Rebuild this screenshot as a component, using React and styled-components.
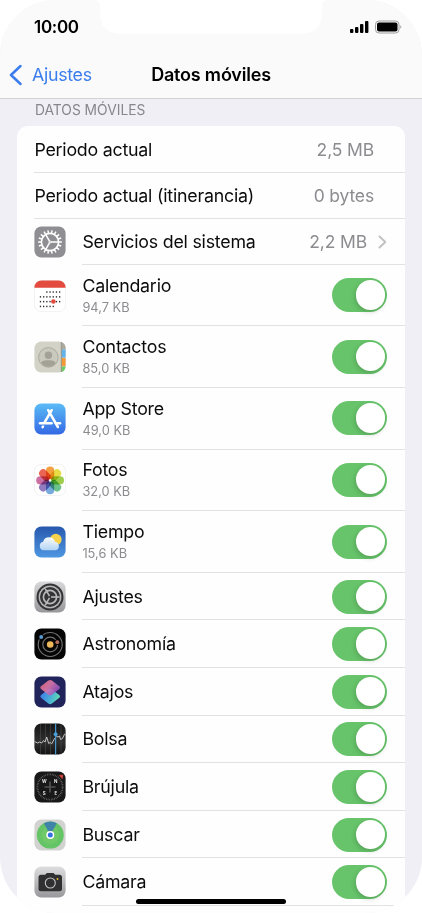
import React, { useState } from 'react'
import styled, { createGlobalStyle } from 'styled-components'

const GlobalStyle = createGlobalStyle`
    * {
        box-sizing: border-box;
    }
    body {
        margin: 0;
        background: #fff;
        font-family: Inter, "Liberation Sans", sans-serif;
        overflow: hidden;
    }
`

const Phone = styled.div`
    position: relative;
    width: 422px;
    height: 913px;
    overflow: hidden;
    border-radius: 56px;
    background: #f0eff5;
    color: #0b0b0b;
`

const Header = styled.header`
    height: 99px;
    background: #fafafa;
    border-bottom: 1px solid #d2d2d5;
`

const Notch = styled.svg`
    position: absolute;
    top: 0;
    left: 94px;
    display: block;
`

const StatusBar = styled.div`
    height: 52px;
    padding: 2px 20px 0 34px;
    display: flex;
    align-items: center;
    justify-content: space-between;
`

const Clock = styled.span`
    font-size: 17px;
    font-weight: 600;
    letter-spacing: -0.3px;
    color: #000;
`

const NavBar = styled.div`
    height: 45px;
    padding: 0 9px;
    display: grid;
    grid-template-columns: 1fr auto 1fr;
    align-items: center;
`

const BackButton = styled.button`
    display: flex;
    align-items: center;
    gap: 10px;
    padding: 0;
    border: 0;
    background: none;
    color: #3b7ded;
    font: inherit;
    font-size: 17.8px;
    line-height: 22px;
    letter-spacing: -0.3px;
`

const Title = styled.h1`
    margin: 0;
    font-size: 18px;
    line-height: 22px;
    font-weight: 600;
    letter-spacing: -0.2px;
    color: #000;
`

const SectionLabel = styled.h2`
    margin: 0;
    height: 27px;
    padding: 2px 0 0 35px;
    font-size: 13.8px;
    line-height: 18px;
    font-weight: 400;
    letter-spacing: 0;
    color: #87878b;
`

const Card = styled.ul`
    list-style: none;
    margin: 0 17px;
    padding: 0.6px 0 20px;
    border-radius: 11px;
    background: #fefefe;
`

const Row = styled.li`
    display: flex;
    height: ${({ $height }) => $height}px;
    padding-left: 17.4px;
`

const IconBox = styled.span`
    width: 48px;
    display: flex;
    align-items: center;
    flex: none;
    svg {
        display: block;
        width: 32px;
        height: 32px;
    }
`

const RowBody = styled.div`
    flex: 1;
    display: flex;
    align-items: center;
    justify-content: space-between;
    padding: ${({ $top = 1 }) => $top}px ${({ $right }) => $right}px 0 0;
    border-bottom: 1px solid #e2e2e4;
`

const Name = styled.div`
    font-size: 17.8px;
    line-height: 22px;
    letter-spacing: -0.22px;
`

const Usage = styled.div`
    margin-top: 2px;
    font-size: 12.8px;
    line-height: 17px;
    letter-spacing: 0.02px;
    color: #8c8c90;
`

const Value = styled.span`
    display: flex;
    align-items: center;
    gap: 11px;
    font-size: 17.5px;
    line-height: 22px;
    letter-spacing: -0.15px;
    color: #8c8c90;
`

const Toggle = styled.button`
    width: 55px;
    height: 34px;
    padding: 2px;
    border: 0;
    border-radius: 17px;
    display: flex;
    justify-content: ${({ $on }) => ($on ? 'flex-end' : 'flex-start')};
    background: ${({ $on }) => ($on ? '#67c46a' : '#e9e9eb')};
`

const Knob = styled.span`
    width: 29.5px;
    height: 29.5px;
    border-radius: 50%;
    background: #fff;
    box-shadow: -1px 2px 5px rgba(0, 0, 0, 0.17);
`

const HomeIndicator = styled.div`
    position: absolute;
    left: 136px;
    top: 899px;
    width: 150px;
    height: 5px;
    border-radius: 3px;
    background: #000;
`

const rotations = (count) => Array.from({ length: count }, (_, i) => (i * 360) / count)

const Tile = ({ fill, stroke, children }) => (
    <svg viewBox="0 0 32 32">
        <rect x="0.4" y="0.4" width="31.2" height="31.2" rx="7" fill={fill} stroke={stroke} strokeWidth="0.7" />
        {children}
    </svg>
)

const SystemIcon = () => (
    <Tile fill="#8e8e93">
        <g stroke="#fff" fill="none">
            <circle cx="16" cy="16" r="8.6" strokeWidth="1.7" />
            {rotations(18).map((a) => (
                <path key={a} d="M16 4.1V7.2" strokeWidth="1.5" transform={`rotate(${a + 10} 16 16)`} />
            ))}
            {[90, 210, 330].map((a) => (
                <path key={a} d="M16 15V7.5" strokeWidth="1.5" transform={`rotate(${a} 16 16)`} />
            ))}
            <circle cx="16" cy="16" r="1" strokeWidth="1" />
        </g>
    </Tile>
)

const calendarDots = [
    [12.8, 16, 19.2, 22.4, 25.6],
    [6.4, 9.6, 12.8, 16, 19.2, 22.4, 25.6],
    [6.4, 9.6, 12.8, 16, 22.4, 25.6],
    [6.4, 9.6, 12.8, 16, 19.2],
]

const CalendarIcon = () => (
    <Tile fill="#fff" stroke="#ededed">
        <path d="M.4 7.7V7.4a7 7 0 0 1 7-7h17.2a7 7 0 0 1 7 7v.3z" fill="#e44b3f" />
        {calendarDots.map((row, y) => row.map((x) => (
            <rect key={`${x}-${y}`} x={x - 0.6} y={11.3 + y * 4.8} width="1.3" height="1.5" fill="#333" />
        )))}
        <circle cx="19.4" cy="21.5" r="2.3" fill="#e44b3f" />
    </Tile>
)

const ContactsIcon = () => (
    <Tile fill="#d3d2c7">
        <path d="M27.6.9a7 7 0 0 1 4 6.5V8.5h-4z" fill="#aaa99f" />
        <path d="M27.6 8.5h4v8h-4z" fill="#61b3ea" />
        <path d="M27.6 17h4v8h-4z" fill="#f29a37" />
        <path d="M27.6 25.5h4a7 7 0 0 1-4 5.7z" fill="#68cc62" />
        <path d="M27.3 1v30" stroke="#8d8b7d" strokeWidth="0.9" />
        <circle cx="14.4" cy="16.4" r="9.8" fill="#cac9be" stroke="#a8a69b" strokeWidth="0.9" />
        <circle cx="14.4" cy="14.2" r="3.7" fill="#a4a298" />
        <path d="M7 22.1c1-2.7 4-2.8 7.4-2.8s6.4.1 7.4 2.8a9.3 9.3 0 0 1-14.8 0z" fill="#a4a298" />
    </Tile>
)

const AppStoreIcon = () => (
    <Tile fill="url(#store)">
        <defs>
            <linearGradient id="store" x2="0" y2="1">
                <stop stopColor="#5abcf6" />
                <stop offset="1" stopColor="#3468e4" />
            </linearGradient>
        </defs>
        <g stroke="#fff" strokeWidth="2.5" strokeLinecap="round">
            <path d="M14.2 7.2L23.9 24" />
            <path d="M17.7 7.2L10.7 19.2" />
            <path d="M6 20.3H17.6" />
            <path d="M22 20.3H26" />
            <path d="M9 23.5L8.6 24.2" />
        </g>
    </Tile>
)

const petals = ['#f5a040', '#e8dd45', '#9fce4c', '#6cc28a', '#76a9dc', '#927cc0', '#cc70a4', '#ea6554']

const PhotosIcon = () => (
    <Tile fill="#fff" stroke="#ededed">
        {petals.map((color, i) => (
            <rect
                key={color}
                x="12"
                y="2.5"
                width="8.2"
                height="13"
                rx="4.1"
                fill={color}
                style={{ mixBlendMode: 'multiply' }}
                transform={`rotate(${i * 45} 16.1 16.4)`}
            />
        ))}
        <circle cx="16.1" cy="16.4" r="1.2" fill="#fff" />
    </Tile>
)

const WeatherIcon = () => (
    <Tile fill="url(#sky)">
        <defs>
            <linearGradient id="sky" x2="0" y2="1">
                <stop stopColor="#2758ad" />
                <stop offset="1" stopColor="#4f97e2" />
            </linearGradient>
            <linearGradient id="cloud" x2="0" y2="1">
                <stop stopColor="#fff" />
                <stop offset="1" stopColor="#b7d7f5" />
            </linearGradient>
        </defs>
        <circle cx="21.8" cy="13.5" r="5.8" fill="#f7d24c" />
        <path d="M9.5 24.3a4.4 4.4 0 0 1-.4-8.6 6.2 6.2 0 0 1 11.9 0 4.4 4.4 0 0 1 .7 8.6z" fill="url(#cloud)" opacity="0.96" />
    </Tile>
)

const SettingsIcon = () => (
    <Tile fill="url(#silver)">
        <defs>
            <linearGradient id="silver" x2="0" y2="1">
                <stop stopColor="#d9d9dc" />
                <stop offset="1" stopColor="#97979b" />
            </linearGradient>
        </defs>
        <circle cx="16" cy="16" r="13.5" fill="#343436" />
        <g stroke="#b9b9bc" fill="none">
            <circle cx="16" cy="16" r="10.6" strokeWidth="1.2" />
            {rotations(36).map((a) => (
                <path key={a} d="M16 4.3V5.6" strokeWidth="0.7" transform={`rotate(${a} 16 16)`} />
            ))}
            <circle cx="16" cy="16" r="6.6" strokeWidth="1.7" />
            {[90, 210, 330].map((a) => (
                <path key={a} d="M16 15V6.3" strokeWidth="1.6" transform={`rotate(${a} 16 16)`} />
            ))}
        </g>
    </Tile>
)

const AstronomyIcon = () => (
    <Tile fill="#050505">
        <g fill="none" stroke="#737373" strokeWidth="1.1">
            <circle cx="16.2" cy="16.5" r="12" />
            <circle cx="16.2" cy="16.5" r="7.4" />
        </g>
        <circle cx="7.2" cy="9" r="3" fill="#050505" />
        <circle cx="23.3" cy="14.2" r="2.9" fill="#050505" />
        <circle cx="7.2" cy="9" r="2" fill="#589bd2" />
        <circle cx="23.3" cy="14.2" r="1.9" fill="#b96f5b" />
        <circle cx="16.2" cy="16.5" r="3.3" fill="#edb85b" />
    </Tile>
)

const ShortcutsIcon = () => (
    <Tile fill="#21245b">
        <defs>
            <linearGradient id="scTop" x1="0" y1="0" x2="1" y2="0.6">
                <stop stopColor="#ef6672" />
                <stop offset="0.5" stopColor="#e27aac" />
                <stop offset="1" stopColor="#8e4fc2" />
            </linearGradient>
            <linearGradient id="scBottom" x1="0" y1="0.3" x2="1" y2="0.6">
                <stop stopColor="#3c7bea" />
                <stop offset="0.6" stopColor="#4cb4d4" />
                <stop offset="1" stopColor="#63dfac" />
            </linearGradient>
        </defs>
        <path d="M14.3 13.4q1.8-1.3 3.6 0l7.4 5.6q1.5 1.4 0 2.8l-7.4 5.8q-1.8 1.3-3.6 0L7 21.8q-1.5-1.4 0-2.8z" fill="url(#scBottom)" />
        <path d="M14.3 4.6q1.8-1.3 3.6 0l7.4 5.6q1.5 1.4 0 2.8l-7.4 5.8q-1.8 1.3-3.6 0L7 13q-1.5-1.4 0-2.8z" fill="url(#scTop)" opacity="0.88" />
    </Tile>
)

const StocksIcon = () => (
    <Tile fill="url(#stocks)">
        <defs>
            <linearGradient id="stocks" x2="0" y2="1">
                <stop stopColor="#161616" />
                <stop offset="0.6" stopColor="#303030" />
                <stop offset="1" stopColor="#111" />
            </linearGradient>
        </defs>
        <path d="M6.5 1v30M11.5 1v30M16.5 1v30M27 1v30" stroke="#555" strokeWidth="0.5" />
        <path d="M.6 18.5l3 1.5 2-1 2 1 2-2.5 1.5 1.5 1.6-5 2 6.5 1.5-1 1.5 1.3 3-5.5 2-1.8 1.3.5 1.5-1 1 3.5 2-1 2-4.3 1 .5" fill="none" stroke="#d3d3d3" strokeWidth="0.9" strokeLinejoin="round" />
        <path d="M21.6.5v31" stroke="#4594cb" strokeWidth="1.2" />
        <circle cx="21.6" cy="11.2" r="1.9" fill="#4ba2de" />
    </Tile>
)

const IconText = styled.text`
    font: 700 4.5px Inter, sans-serif;
    fill: #e6e6e6;
    text-anchor: middle;
`

const CompassIcon = () => (
    <Tile fill="#181818">
        <circle cx="16" cy="16" r="12.6" fill="none" stroke="#888" strokeWidth="1.8" strokeDasharray="0.5 1.149" />
        <path d="M16 10.5v11M10.5 16h11" stroke="#515151" strokeWidth="1.7" />
        <IconText x="10.3" y="12">W</IconText>
        <IconText x="21.8" y="12">N</IconText>
        <IconText x="10.3" y="23.6">S</IconText>
        <IconText x="21.8" y="23.6">E</IconText>
        <path d="M25.3 4.4l3.600-.5-.5 3.800z" fill="#e1483c" stroke="#e1483c" strokeWidth="0.5" strokeLinejoin="round" />
    </Tile>
)

const FindIcon = () => (
    <Tile fill="#d2d3d1">
        <circle cx="16.3" cy="16.1" r="13.5" fill="#65c466" />
        <circle cx="16.3" cy="16.1" r="8.9" fill="#74cc6b" opacity="0.7" />
        <path d="M16.3 16L9.8 4.2a13.5 13.5 0 0 1 13 0z" fill="#3978b5" opacity="0.85" />
        <circle cx="16.3" cy="16.1" r="4" fill="#fff" />
        <circle cx="16.3" cy="16.1" r="2.5" fill="#3271de" />
    </Tile>
)

const CameraIcon = () => (
    <Tile fill="url(#camera)">
        <defs>
            <linearGradient id="camera" x2="0" y2="1">
                <stop stopColor="#dedee0" />
                <stop offset="1" stopColor="#98989c" />
            </linearGradient>
        </defs>
        <path d="M7 8.7h4.2l1.7-1.7h6.6l1.7 1.7h4.3a2.5 2.5 0 0 1 2.5 2.5v11.6a2.5 2.5 0 0 1-2.5 2.5H7a2.5 2.5 0 0 1-2.5-2.5V11.2A2.5 2.5 0 0 1 7 8.7z" fill="#303032" />
        <circle cx="16.3" cy="17" r="5" fill="none" stroke="#c5c5c7" strokeWidth="1.1" />
        <circle cx="23.5" cy="13" r="0.9" fill="#edbd31" />
    </Tile>
)

const apps = [
    { name: 'Calendario', usage: '94,7 KB', Icon: CalendarIcon },
    { name: 'Contactos', usage: '85,0 KB', Icon: ContactsIcon },
    { name: 'App Store', usage: '49,0 KB', Icon: AppStoreIcon },
    { name: 'Fotos', usage: '32,0 KB', Icon: PhotosIcon },
    { name: 'Tiempo', usage: '15,6 KB', Icon: WeatherIcon },
    { name: 'Ajustes', Icon: SettingsIcon },
    { name: 'Astronomía', Icon: AstronomyIcon },
    { name: 'Atajos', Icon: ShortcutsIcon },
    { name: 'Bolsa', Icon: StocksIcon },
    { name: 'Brújula', Icon: CompassIcon },
    { name: 'Buscar', Icon: FindIcon },
    { name: 'Cámara', Icon: CameraIcon },
]

const AppRow = ({ name, usage, Icon }) => {
    const [on, setOn] = useState(true)
    return (
        <Row $height={usage ? 61.6 : 47.6}>
            <IconBox><Icon /></IconBox>
            <RowBody $right={17.7} $top={usage ? 0 : 1}>
                <div>
                    <Name>{name}</Name>
                    {usage && <Usage>{usage}</Usage>}
                </div>
                <Toggle $on={on} aria-label={name} onClick={() => setOn(!on)}>
                    <Knob />
                </Toggle>
            </RowBody>
        </Row>
    )
}

const App = () => {
    return (
        <>
            <GlobalStyle />
            <Phone>
                <Header>
                    <StatusBar>
                        <Clock>10:00</Clock>
                        <svg width="53" height="14" viewBox="0 0 53 14">
                            <rect x="1" y="9" width="3.4" height="4" rx="1" />
                            <rect x="6" y="7" width="3.4" height="6" rx="1" />
                            <rect x="11" y="4" width="3.4" height="9" rx="1" />
                            <rect x="16" y="1" width="3.4" height="12" rx="1" />
                            <rect x="26.5" y="1" width="23.5" height="12" rx="3.5" fill="none" stroke="#9c9c9c" />
                            <rect x="28" y="2.5" width="20.5" height="9" rx="2" />
                            <path d="M51.3 5.3q2 1.7 0 3.4z" fill="#999" />
                        </svg>
                    </StatusBar>
                    <NavBar>
                        <BackButton>
                            <svg width="13" height="22" viewBox="0 0 13 22">
                                <path d="M11.500 2L2 11l9.500 9" fill="none" stroke="currentColor" strokeWidth="2.5" strokeLinecap="round" strokeLinejoin="round" />
                            </svg>
                            Ajustes
                        </BackButton>
                        <Title>Datos móviles</Title>
                    </NavBar>
                </Header>
                <SectionLabel>DATOS MÓVILES</SectionLabel>
                <Card>
                    <Row $height={46.1}>
                        <RowBody $right={31}>
                            <Name>Periodo actual</Name>
                            <Value>2,5 MB</Value>
                        </RowBody>
                    </Row>
                    <Row $height={46.1}>
                        <RowBody $right={31}>
                            <Name>Periodo actual (itinerancia)</Name>
                            <Value>0 bytes</Value>
                        </RowBody>
                    </Row>
                    <Row $height={46.1}>
                        <IconBox><SystemIcon /></IconBox>
                        <RowBody $right={18}>
                            <Name>Servicios del sistema</Name>
                            <Value>
                                2,2 MB
                                <svg width="9" height="14" viewBox="0 0 9 14">
                                    <path d="M1.5 1.5L7.3 7l-5.8 5.5" fill="none" stroke="#c2c2c5" strokeWidth="2" strokeLinecap="round" strokeLinejoin="round" />
                                </svg>
                            </Value>
                        </RowBody>
                    </Row>
                    {apps.map((app) => <AppRow key={app.name} {...app} />)}
                </Card>
                <Notch width="234" height="34" viewBox="0 0 234 34">
                    <path d="M0 0Q6 0 6 6V13Q6 33.5 27 33.5H207Q228 33.5 228 13V6Q228 0 234 0z" fill="#fff" />
                </Notch>
                <HomeIndicator />
            </Phone>
        </>
    )
}

export default App
